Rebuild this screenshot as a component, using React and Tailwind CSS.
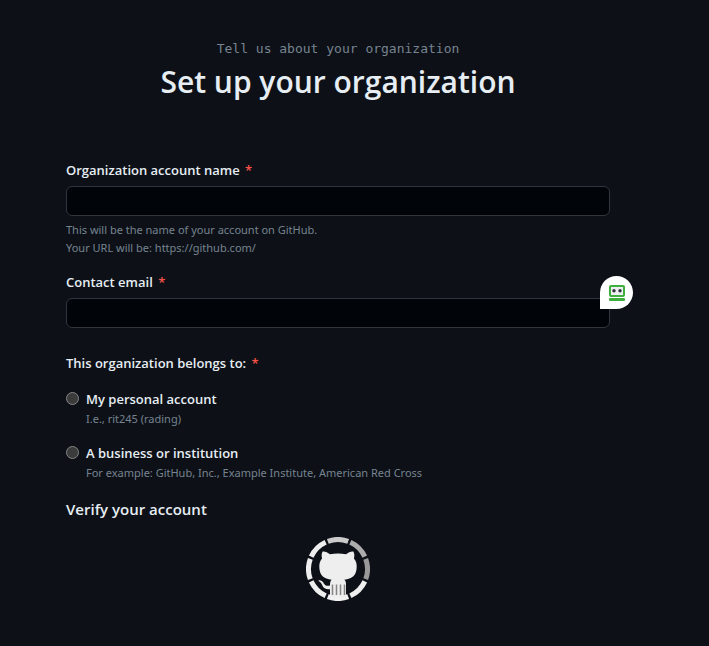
const RING = [
  '#cbcbcb',
  '#acacac',
  '#999999',
  '#eeeeee',
  '#f2f2f2',
  '#eeeeee',
  '#eeeeee',
  '#eeeeee',
];

function Spinner() {
  return (
    <svg width="64" height="64" viewBox="0 0 64 64" role="img" aria-label="Loading">
      {RING.map((color, i) => (
        <path
          key={i}
          d="M21.8 4.3A29.5 29.5 0 0 1 42.2 4.3"
          transform={`rotate(${i * 45} 32 32)`}
          fill="none"
          stroke={color}
          strokeWidth="5"
        />
      ))}
      <path
        fill="#eeeeee"
        d="M16.6 14.6C18.8 14 21.6 15.6 24 17.2C29 16.2 35 16.2 40 17.2C42.400 15.600 45.200 14 47.400 14.600C48.600 17 48.600 19.400 47.900 21.600C50 24 50.700 26.600 50.700 29.600C50.700 38.600 46 42 38.400 42.800C39.700 44 40 45.600 40 47.500V60H24V52.200C19.800 52.600 17.600 51.200 16.400 48.400C15.600 46.400 14.400 45 12.300 43.800C12.300 42.900 14.600 43.100 16.100 44.300C17.600 45.500 18 47.600 19.800 48.400C21.400 49 22.900 48.800 24 48.400C24 46 24.300 44 25.600 42.800C18 42 13.300 38.600 13.300 29.600C13.300 26.600 14 24 16.100 21.600C15.400 19.400 15.400 17 16.600 14.600Z"
      />
      <path d="M26.500 47.500V58M30.500 47.500V58M34.500 47.500V58M38.500 47.500V58" stroke="#858585" strokeWidth="1.500" />
    </svg>
  );
}

function RobotBadge() {
  return (
    <button
      type="button"
      aria-label="Fill with password manager"
      className="absolute -right-[23px] -top-[22px] flex size-[33px] items-center justify-center rounded-full rounded-bl-none bg-white"
    >
      <svg width="16" height="16" viewBox="0 0 16 16" aria-hidden="true">
        <rect x="1" y="1" width="14" height="10" rx="1" fill="#eeeef2" stroke="#3eae3c" strokeWidth="2" />
        <circle cx="5" cy="5.800" r="1.700" fill="#30343a" />
        <circle cx="11" cy="5.800" r="1.700" fill="#30343a" />
        <rect x="0" y="13" width="16" height="3" rx="1" fill="#3eae3c" />
      </svg>
    </button>
  );
}

function Star() {
  return <span className="ml-0.5 text-[#f85149]">*</span>;
}

function Field({ id, label, type, children }) {
  return (
    <div>
      <label htmlFor={id} className="block text-[13px] font-semibold leading-5">
        {label} <Star />
      </label>
      <div className="relative mt-1.5">
        <input
          id={id}
          type={type}
          required
          className="block h-[30px] w-full rounded-md border border-[#30363d] bg-[#010409] px-3 text-sm text-[#e6edf3] outline-none focus:border-[#1f6feb]"
        />
        {children}
      </div>
    </div>
  );
}

function Choice({ id, label, note }) {
  return (
    <div className="flex gap-[7px]">
      <input
        id={id}
        type="radio"
        name="owner"
        aria-describedby={`${id}-note`}
        className="mt-[3px] size-[13px] shrink-0 appearance-none rounded-full border border-[#858585] bg-[#3b3b3b] checked:border-4 checked:border-[#1f6feb]"
      />
      <div>
        <label htmlFor={id} className="block text-[13px] font-semibold leading-5">
          {label}
        </label>
        <p id={`${id}-note`} className="font-['Noto_Sans',sans-serif] text-[11px] leading-5 text-[#768390]">
          {note}
        </p>
      </div>
    </div>
  );
}

export default function App() {
  return (
    <div className="min-h-screen bg-[#0d1117] pb-11 pl-[66px] pr-[99px] pt-[39px] font-['Open_Sans','Noto_Sans',sans-serif] text-[#e6edf3]">
      <main>
        <header className="text-center">
          <p className="font-['DejaVu_Sans_Mono',monospace] text-[13px] leading-5 text-[#768390]">
            Tell us about your organization
          </p>
          <h1 className="text-3xl font-semibold leading-[45px]">Set up your organization</h1>
        </header>
        <form className="mt-14">
          <Field id="account" label="Organization account name" type="text" />
          <p className="mt-[5px] font-['Noto_Sans',sans-serif] text-[11px] leading-[18px] text-[#768390]">
            This will be the name of your account on GitHub.
            <br />
            Your URL will be: https://github.com/
          </p>
          <div className="mt-[15px]">
            <Field id="email" label="Contact email" type="email">
              <RobotBadge />
            </Field>
          </div>
          <fieldset className="mt-[25px]">
            <legend className="text-[13px] font-semibold leading-5">
              This organization belongs to: <Star />
            </legend>
            <div className="mt-4 flex flex-col gap-3.5">
              <Choice id="personal" label="My personal account" note="I.e., rit245 (rading)" />
              <Choice
                id="business"
                label="A business or institution"
                note="For example: GitHub, Inc., Example Institute, American Red Cross"
              />
            </div>
          </fieldset>
          <h2 className="mt-3.5 text-[15px] font-semibold leading-6">Verify your account</h2>
          <div className="mt-4 flex justify-center">
            <Spinner />
          </div>
        </form>
      </main>
    </div>
  );
}
